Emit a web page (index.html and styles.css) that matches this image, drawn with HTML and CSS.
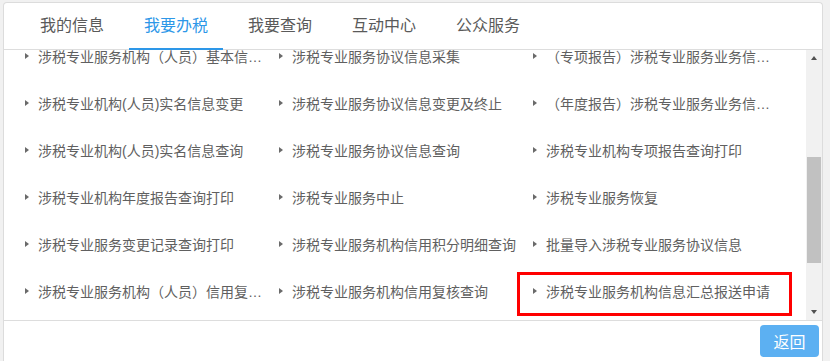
FILE: index.html
```html
<!DOCTYPE html>
<html lang="zh-CN">
<head>
    <meta charset="UTF-8">
    <title>我要办税</title>
    <link rel="stylesheet" href="styles.css">
</head>
<body>
    <div class="panel">
        <ul class="tabs">
            <li>我的信息</li>
            <li class="active">我要办税</li>
            <li>我要查询</li>
            <li>互动中心</li>
            <li>公众服务</li>
        </ul>
        <div class="body">
            <div class="view">
                <ul class="menu">
                    <li><span>涉税专业服务机构（人员）基本信息采集</span></li>
                    <li><span>涉税专业服务协议信息采集</span></li>
                    <li><span>（专项报告）涉税专业服务业务信息采集</span></li>
                    <li><span>涉税专业机构(人员)实名信息变更</span></li>
                    <li><span>涉税专业服务协议信息变更及终止</span></li>
                    <li><span>（年度报告）涉税专业服务业务信息采集</span></li>
                    <li><span>涉税专业机构(人员)实名信息查询</span></li>
                    <li><span>涉税专业服务协议信息查询</span></li>
                    <li><span>涉税专业机构专项报告查询打印</span></li>
                    <li><span>涉税专业机构年度报告查询打印</span></li>
                    <li><span>涉税专业服务中止</span></li>
                    <li><span>涉税专业服务恢复</span></li>
                    <li><span>涉税专业服务变更记录查询打印</span></li>
                    <li><span>涉税专业服务机构信用积分明细查询</span></li>
                    <li><span>批量导入涉税专业服务协议信息</span></li>
                    <li><span>涉税专业服务机构（人员）信用复核申请</span></li>
                    <li><span>涉税专业服务机构信用复核查询</span></li>
                    <li><span>涉税专业服务机构信息汇总报送申请</span></li>
                </ul>
                <!-- 标注框 -->
                <div class="mark"></div>
            </div>
            <div class="scrollbar">
                <div class="arrow up"></div>
                <div class="track"><div class="thumb"></div></div>
                <div class="arrow down"></div>
            </div>
        </div>
        <div class="foot">
            <button class="back">返回</button>
        </div>
    </div>
</body>
</html>
```

FILE: styles.css
```css
body{
    margin: 0;
    background: #f1f1f1;
    font-family: "Liberation Sans", "Noto Sans CJK SC", sans-serif;
}
ul{
    margin: 0;
    padding: 0;
    list-style: none;
}
.panel{
    margin: 2px 7px 0 3px;
    border: 1px solid #dcdcdc;
    border-bottom: none;
    border-radius: 4px 4px 0 0;
    background: #fff;
}
.tabs{
    display: flex;
    height: 46px;
    padding-left: 21px;
    border-bottom: 1px solid #ddd;
}
.tabs li{
    padding: 0 15px;
    margin-right: 10px;
    line-height: 46px;
    font-size: 16px;
    color: #5a5a5a;
}
.tabs .active{
    color: #2d97e8;
    border-bottom: 2px solid #2d97e8;
    height: 45px;
    margin-bottom: -1px;
}
.body{
    display: flex;
    height: 270px;
}
.view{
    flex: 1;
    overflow: hidden;
    position: relative;
}
.menu{
    display: flex;
    flex-wrap: wrap;
    padding-left: 21px;
    margin-top: -18px;
}
.menu li{
    width: 254px;
    height: 47px;
    display: flex;
    align-items: center;
    gap: 9px;
    font-size: 14px;
    color: #606060;
}
.menu li::before{
    content: "";
    border-left: 4px solid #6a6a6a;
    border-top: 3.5px solid transparent;
    border-bottom: 3.5px solid transparent;
}
.menu li span{
    max-width: 225px;
    white-space: nowrap;
    overflow: hidden;
    text-overflow: ellipsis;
}
.mark{
    position: absolute;
    left: 513px;
    top: 222px;
    width: 269px;
    height: 38px;
    border: 3px solid #f00;
}
.scrollbar{
    width: 16px;
    background: #f1f1f1;
    display: flex;
    flex-direction: column;
}
.arrow{
    height: 16px;
    display: flex;
    align-items: center;
    justify-content: center;
}
.arrow::after{
    content: "";
    border-left: 3.5px solid transparent;
    border-right: 3.5px solid transparent;
}
.up::after{
    border-bottom: 4px solid #505050;
}
.down::after{
    border-top: 4px solid #505050;
}
.track{
    flex: 1;
    padding: 91px 1px 0;
}
.thumb{
    height: 106px;
    background: #c1c1c1;
}
.foot{
    border-top: 1px solid #ddd;
    display: flex;
    justify-content: flex-end;
    padding: 4px 3px 8px;
}
.back{
    width: 59px;
    height: 32px;
    border: none;
    border-radius: 4px;
    background: #5cb0f2;
    color: #fff;
    font-size: 16px;
    font-family: "Noto Sans CJK SC", sans-serif;
}
```
